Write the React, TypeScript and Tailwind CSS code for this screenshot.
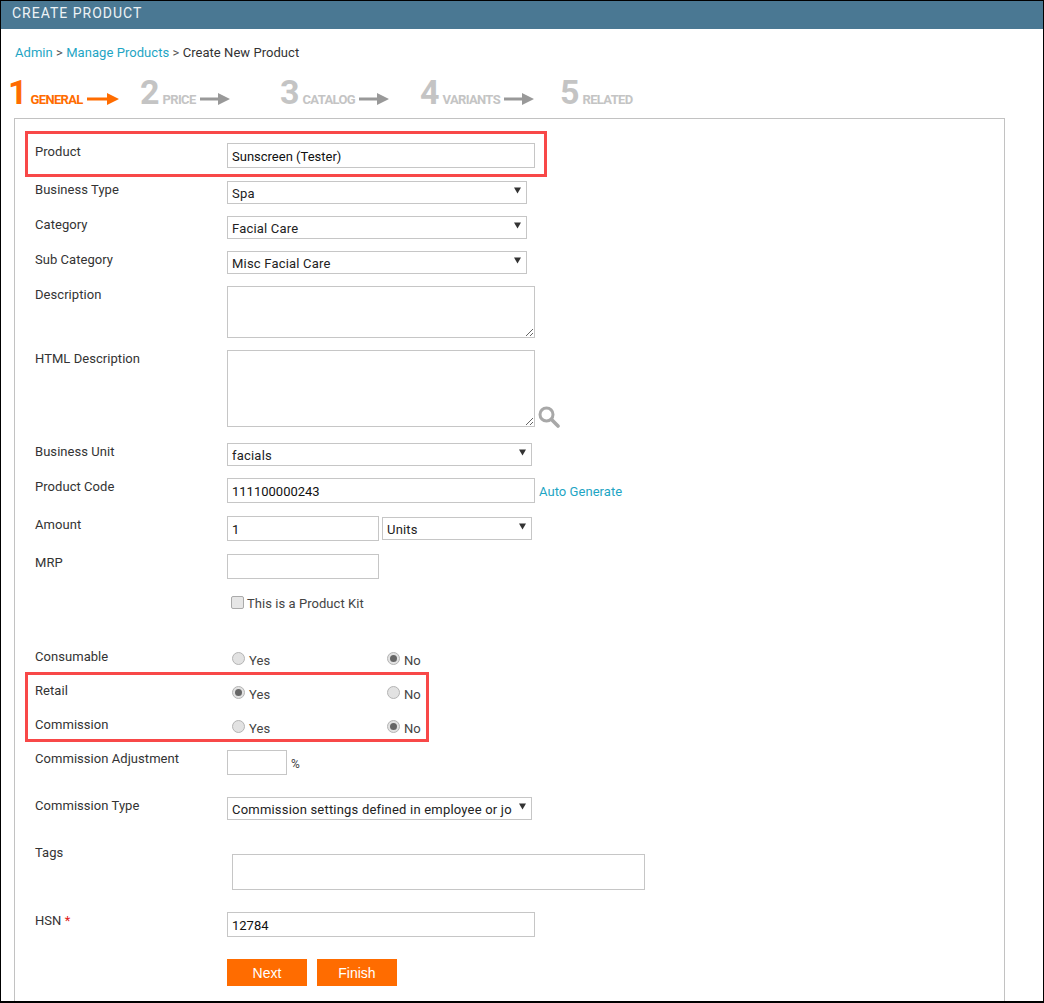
import React from "react";

const Arrow = ({ color, w = 32 }: { color: string; w?: number }) => (
  <svg width={w} height="14" viewBox={`0 0 ${w} 14`} className="block">
    <path d={`M0 5.5H${w - 12}V1L${w} 7L${w - 12} 13V8.5H0Z`} fill={color} />
  </svg>
);

const Step = ({ n, label, active, w, arrow = true }: { n: string; label: string; active?: boolean; w: string; arrow?: boolean }) => (
  <div className={`flex items-end ${w}`}>
    <span className={`text-[34px] leading-[32px] font-bold tracking-[-1px] ${active ? "text-[#ff6c00]" : "text-[#c4c4c4]"}`}>{n}</span>
    <span className={`ml-[4px] mb-0 text-[13px] leading-[16px] font-bold tracking-[-0.65px] ${active ? "text-[#ff6c00]" : "text-[#c4c4c4]"}`}>{label}</span>
    {arrow && (
      <span className="ml-[4px] mb-[2px]">
        <Arrow color={active ? "#ff6c00" : "#999999"} w={active ? 32 : 30} />
      </span>
    )}
  </div>
);

const Label = ({ children, top = "mt-[1px]" }: { children: React.ReactNode; top?: string }) => (
  <div className={`w-[192px] shrink-0 text-[13px] leading-[16px] text-[#333] tracking-[0.05px] ${top}`}>{children}</div>
);

const inputCls =
  "h-[25px] border border-[#c6c6c6] bg-white px-[4px] pt-[2px] text-[13px] text-[#111] outline-none";

const Select = ({ value, w }: { value: string; w: string }) => (
  <div className={`relative ${w} h-[23px]`}>
    <select
      defaultValue={value}
      className="block h-[23px] w-full appearance-none border border-[#c6c6c6] bg-white pl-[4px] pr-[19px] pt-[2px] text-[13px] text-[#222] outline-none tracking-[0.2px]"
    >
      <option>{value}</option>
    </select>
    <svg width="7" height="7" viewBox="0 0 7 7" className="absolute right-[6px] top-[6px] pointer-events-none">
      <path d="M0 0.5H7L3.5 6.5Z" fill="#333" />
    </svg>
  </div>
);

const Radio = ({ on, label, w }: { on?: boolean; label: string; w?: string }) => (
  <div className={`flex items-start ${w ?? ""}`}>
    <span className="relative mt-[3px] flex h-[13px] w-[13px] items-center justify-center rounded-full border border-[#b4b4b4] bg-[#e2e2e2]">
      {on && <span className="h-[7px] w-[7px] rounded-full bg-[#666]" />}
    </span>
    <span className="ml-[4px] mt-[4px] text-[13px] leading-[16px] text-[#444] tracking-[0.05px]">{label}</span>
  </div>
);

const RadioRow = ({ label, yes, mt }: { label: string; yes: boolean; mt: string }) => (
  <div className={`flex h-[24px] ${mt}`}>
    <Label top="mt-0">{label}</Label>
    <div className="flex pl-[5px]">
      <Radio on={yes} label="Yes" w="w-[155px]" />
      <Radio on={!yes} label="No" />
    </div>
  </div>
);

export default function App() {
  return (
    <div className="relative h-[1003px] w-[1044px] overflow-hidden border border-b-2 border-black bg-white font-['Roboto',sans-serif]">
      <div className="flex h-[28px] items-center bg-[#4a7893] pb-[3px] pl-[11px] text-[14px] font-normal uppercase tracking-[1px] text-[#eef3f6]">
        Create Product
      </div>

      <div className="mt-[16px] pl-[14px] text-[13px] leading-[16px] text-[#333] tracking-[0.05px]">
        <span className="text-[#1ea5c4]">Admin</span>
        <span className="text-[#555]"> &gt; </span>
        <span className="text-[#1ea5c4]">Manage Products</span>
        <span className="text-[#555]"> &gt; </span>
        Create New Product
      </div>

      <div className="mt-[14px] flex h-[33px] items-end pl-[7px]">
        <Step n="1" label="GENERAL" active w="w-[132px]" />
        <Step n="2" label="PRICE" w="w-[140px]" />
        <Step n="3" label="CATALOG" w="w-[140px]" />
        <Step n="4" label="VARIANTS" w="w-[140px]" />
        <Step n="5" label="RELATED" w="w-[140px]" arrow={false} />
      </div>

      <div className="ml-[13px] mt-[10px] h-[900px] w-[991px] border border-[#c2c2c2] pl-[20px] pt-[24px]">
        <div className="flex">
          <Label>Product</Label>
          <input className={`${inputCls} w-[308px]`} defaultValue="Sunscreen (Tester)" />
        </div>
        <div className="mt-[13px] flex">
          <Label>Business Type</Label>
          <Select value="Spa" w="w-[300px]" />
        </div>
        <div className="mt-[12px] flex">
          <Label>Category</Label>
          <Select value="Facial Care" w="w-[300px]" />
        </div>
        <div className="mt-[12px] flex">
          <Label>Sub Category</Label>
          <Select value="Misc Facial Care" w="w-[300px]" />
        </div>
        <div className="mt-[12px] flex">
          <Label>Description</Label>
          <textarea className="block h-[52px] w-[308px] border border-[#c6c6c6] outline-none" />
        </div>
        <div className="mt-[12px] flex">
          <Label>HTML Description</Label>
          <textarea className="block h-[77px] w-[308px] border border-[#c6c6c6] outline-none" />
          <svg width="22" height="22" viewBox="0 0 22 22" className="ml-[3px] mt-[56px]">
            <circle cx="8.5" cy="8.5" r="6.5" fill="none" stroke="#a8a8a8" strokeWidth="3" />
            <path d="M13.5 13.5L20 20" stroke="#a8a8a8" strokeWidth="3.6" strokeLinecap="round" />
          </svg>
        </div>
        <div className="mt-[15px] flex">
          <Label>Business Unit</Label>
          <Select value="facials" w="w-[305px]" />
        </div>
        <div className="mt-[12px] flex">
          <Label>Product Code</Label>
          <input className={`${inputCls} w-[308px]`} defaultValue="111100000243" />
          <span className="ml-[4px] mt-[6px] text-[13px] leading-[16px] tracking-[0.05px] text-[#1ea5c4]">Auto Generate</span>
        </div>
        <div className="mt-[13px] flex">
          <Label>Amount</Label>
          <input className={`${inputCls} w-[152px]`} defaultValue="1" />
          <div className="ml-[3px] mt-[1px]">
            <Select value="Units" w="w-[150px]" />
          </div>
        </div>
        <div className="mt-[13px] flex">
          <Label>MRP</Label>
          <input className={`${inputCls} w-[152px]`} />
        </div>
        <div className="mt-[16px] flex pl-[196px]">
          <span className="mt-[1px] h-[13px] w-[13px] rounded-[2px] border border-[#aaa] bg-[#e6e6e6]" />
          <span className="ml-[3px] mt-[1px] text-[13px] leading-[16px] tracking-[0.05px] text-[#444]">This is a Product Kit</span>
        </div>

        <RadioRow label="Consumable" yes={false} mt="mt-[37px]" />
        <RadioRow label="Retail" yes mt="mt-[10px]" />
        <RadioRow label="Commission" yes={false} mt="mt-[10px]" />

        <div className="mt-[9px] flex">
          <Label>Commission Adjustment</Label>
          <input className={`${inputCls} w-[60px]`} />
          <span className="ml-[4px] mt-[6px] text-[12px] leading-[16px] text-[#444]">%</span>
        </div>
        <div className="mt-[22px] flex">
          <Label>Commission Type</Label>
          <Select value="Commission settings defined in employee or job" w="w-[305px]" />
        </div>
        <div className="mt-[34px] flex">
          <Label top="-mt-[9px]">Tags</Label>
          <div className="ml-[5px] h-[36px] w-[413px] border border-[#c6c6c6]" />
        </div>
        <div className="mt-[22px] flex">
          <Label>
            HSN <span className="text-[#e02020]">*</span>
          </Label>
          <input className={`${inputCls} w-[308px]`} defaultValue="12784" />
        </div>
        <div className="mt-[22px] flex gap-[10px] pl-[192px]">
          <button className="h-[27px] w-[80px] bg-[#ff6c00] pt-[1px] font-['Liberation_Sans',sans-serif] text-[14px] text-white">Next</button>
          <button className="h-[27px] w-[80px] bg-[#ff6c00] pt-[1px] font-['Liberation_Sans',sans-serif] text-[14px] text-white">Finish</button>
        </div>
      </div>

      <div className="pointer-events-none absolute left-[24px] top-[130px] h-[46px] w-[522px] border-[3px] border-[#f84848]" />
      <div className="pointer-events-none absolute left-[24px] top-[671px] h-[70px] w-[404px] border-[3px] border-[#f84848]" />
    </div>
  );
}
